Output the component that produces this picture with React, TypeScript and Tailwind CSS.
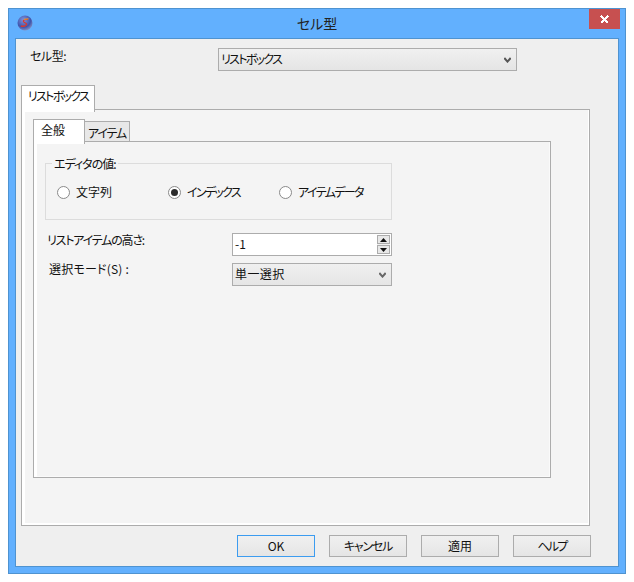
const font = { fontFamily: '"Noto Sans CJK JP", "Liberation Sans", sans-serif' }

const AppIcon = () => (
  <svg width="16" height="16" viewBox="0 0 16 16">
    <defs>
      <radialGradient id="orb" cx="0.4" cy="0.3" r="0.8">
        <stop offset="0" stopColor="#7f93dc" />
        <stop offset="0.6" stopColor="#3f55ad" />
        <stop offset="1" stopColor="#9aa3c8" />
      </radialGradient>
    </defs>
    <circle cx="8" cy="8" r="7.5" fill="url(#orb)" />
    <path d="M11 4.6C8.6 4.2 6 4.8 6.4 6.4C6.8 8 9.8 7.6 9.6 9.4C9.4 11 6.4 11.6 3.8 11" fill="none" stroke="#d8382f" strokeWidth="1.3" />
    <path d="M7 4.3L11.5 3.8" stroke="#e8a030" strokeWidth="1" />
  </svg>
)

const CloseIcon = () => (
  <svg width="9" height="9" viewBox="0 0 9 9" shapeRendering="crispEdges">
    <path d="M1 1L8 8M8 1L1 8" stroke="#fff" strokeWidth="2" />
  </svg>
)

const Chevron = ({ color }: { color: string }) => (
  <svg width="7" height="6" viewBox="0 0 7 6">
    <path d="M0.3 1L3.5 4.6L6.7 1" fill="none" stroke={color} strokeWidth="2" />
  </svg>
)

const Radio = ({ label, checked, className, labelClass }: { label: string; checked?: boolean; className: string; labelClass?: string }) => (
  <div className={`flex items-center gap-[6px] ${className}`}>
    <span className="flex h-[13px] w-[13px] items-center justify-center rounded-full border border-[#8a8a8a] bg-white">
      {checked && <span className="h-[7px] w-[7px] rounded-full bg-[#2b2b2b]" />}
    </span>
    <span className={`pb-[1px] ${labelClass ?? ''}`}>{label}</span>
  </div>
)

const Combo = ({ label, className, labelClass, chevron }: { label: string; className: string; labelClass: string; chevron: string }) => (
  <div className={`flex h-[23px] items-center justify-between border border-[#acacac] bg-gradient-to-b from-[#f0f0f0] to-[#e5e5e5] pr-[5px] pl-[2px] ${className}`}>
    <span className={`pb-[2px] ${labelClass}`}>{label}</span>
    <Chevron color={chevron} />
  </div>
)

const DialogButton = ({ label, focused, labelClass }: { label: string; focused?: boolean; labelClass?: string }) => (
  <div className={`flex h-[22px] w-[78px] items-center justify-center border bg-gradient-to-b from-[#f0f0f0] to-[#e5e5e5] ${focused ? 'border-[#3c9cf0]' : 'border-[#acacac]'}`}>
    <span className={labelClass}>{label}</span>
  </div>
)

const SpinArrow = ({ up }: { up?: boolean }) => (
  <div className="flex h-[9px] w-[13px] items-center justify-center border border-[#acacac] bg-[#e8e8e8]">
    <svg width="7" height="4" viewBox="0 0 7 4">
      <path d={up ? 'M3.5 0L7 4H0Z' : 'M0 0H7L3.5 4Z'} fill="#111" />
    </svg>
  </div>
)

export default function App() {
  return (
    <div className="min-h-screen bg-white p-2 text-[12px] leading-none whitespace-nowrap text-[#111] [font-feature-settings:'palt']" style={font}>
      <div className="flex h-[566px] w-[618px] flex-col border border-[#4f93d0] bg-[#62b0fe] px-[6px] pb-[6px]">
        {/* title bar */}
        <div className="relative flex h-[29px] items-center justify-center pb-[1px] text-[14px] text-[#222]">
          <div className="absolute top-[6px] left-[2px]">
            <AppIcon />
          </div>
          <span>セル型</span>
          <div className="absolute top-0 right-[-1px] flex h-[20px] w-[31px] items-center justify-center bg-[#c75050]">
            <CloseIcon />
          </div>
        </div>

        {/* client area */}
        <div className="flex flex-1 flex-col border border-[#4f93d0] bg-[#efefef] pt-[9px] pl-[5px]">
          <div className="flex h-[23px] items-center">
            <span className="ml-[9px] w-[188px] pb-[8px] tracking-[-0.5px]">セル型:</span>
            <Combo label="リストボックス" labelClass="tracking-[-1.7px]" chevron="#555" className="w-[299px]" />
          </div>

          {/* outer tabs */}
          <div className="mt-[14px] flex">
            <div className="relative z-10 mb-[-3px] flex h-[27px] w-[74px] items-center justify-center border border-b-0 border-[#acacac] bg-[#fff] pb-[6px] tracking-[-1.7px]">
              リストボックス
            </div>
          </div>
          <div className="flex h-[417px] w-[569px] flex-col border border-[#acacac] bg-[#f4f4f4] pt-[9px] pl-[11px] shadow-[inset_3px_0_0_#fff,inset_0_-2px_0_#fff,inset_-1px_0_0_#fff]">
            {/* inner tabs */}
            <div className="flex items-end">
              <div className="relative z-10 mb-[-3px] flex h-[25px] w-[52px] items-center border border-b-0 border-[#acacac] bg-white pb-[5px] pl-[7px]">
                全般
              </div>
              <div className="flex h-[20px] w-[45px] items-center justify-center border border-b-0 border-l-0 border-[#acacac] bg-[#e8e8e8] pt-[2px] tracking-[-1.2px]">
                アイテム
              </div>
            </div>
            <div className="h-[337px] w-[518px] border border-[#acacac] bg-[#f4f4f4] pt-[21px] pl-[11px] shadow-[inset_3px_0_0_#fff,inset_0_-1px_0_#fafafa,inset_-1px_0_0_#fafafa]">
              {/* editor value group */}
              <div className="relative flex h-[57px] w-[347px] items-center border border-[#dcdcdc] pt-[1px] pl-[11px]">
                <span className="absolute top-[-6px] left-[6px] bg-[#f4f4f4] px-[2px] tracking-[-1px]">エディタの値:</span>
                <Radio label="文字列" checked={false} className="w-[111px]" />
                <Radio label="インデックス" checked labelClass="tracking-[-1.7px]" className="w-[111px]" />
                <Radio label="アイテムデータ" labelClass="tracking-[-1.6px]" className="" />
              </div>

              <div className="mt-[13px] flex h-[23px] items-start">
                <span className="ml-[2px] w-[185px] pt-[1px] tracking-[-1.2px]">リストアイテムの高さ:</span>
                <div className="flex h-[23px] w-[160px] items-center justify-between border border-[#acacac] bg-white pr-[1px] pl-[2px]">
                  <span className="pb-[2px]">-1</span>
                  <div className="flex flex-col gap-[1px] bg-[#f0f0f0]">
                    <SpinArrow up />
                    <SpinArrow />
                  </div>
                </div>
              </div>

              <div className="mt-[7px] flex h-[23px] items-start">
                <span className="ml-[4px] w-[183px] tracking-[0.2px]">選択モード(S) :</span>
                <Combo label="単一選択" labelClass="tracking-[0.4px]" chevron="#666" className="w-[160px]" />
              </div>
            </div>
          </div>

          {/* dialog buttons */}
          <div className="mt-[9px] ml-[216px] flex gap-[14px]">
            <DialogButton label="OK" focused />
            <DialogButton label="キャンセル" labelClass="tracking-[-1.2px]" />
            <DialogButton label="適用" />
            <DialogButton label="ヘルプ" labelClass="tracking-[-1.7px]" />
          </div>
        </div>
      </div>
    </div>
  )
}
